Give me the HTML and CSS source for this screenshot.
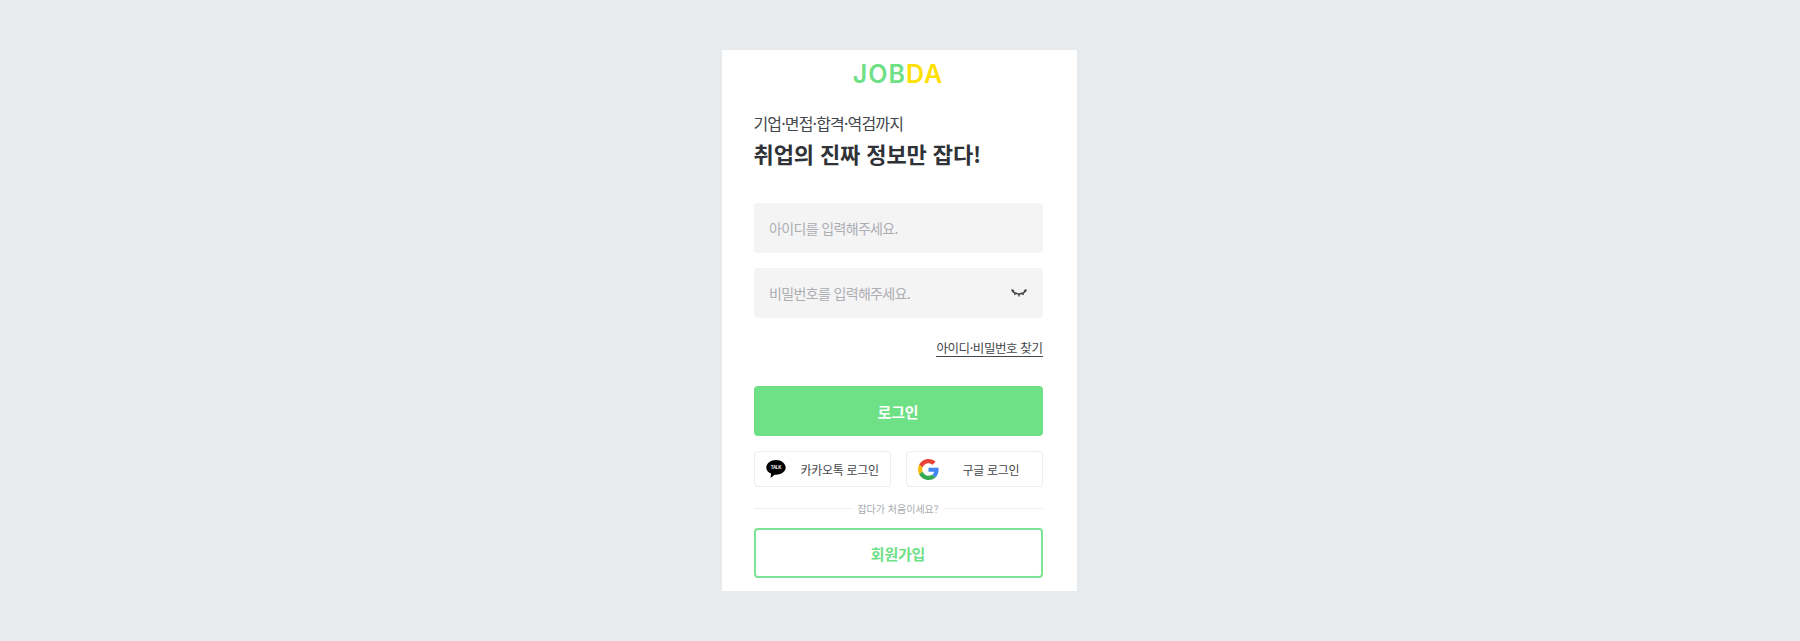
FILE: index.html
```html
<!DOCTYPE html>
<html lang="ko">
<head>
<meta charset="utf-8">
<title>JOBDA 로그인</title>
<link rel="stylesheet" href="styles.css">
</head>
<body>
<main class="panel">
  <h1 class="logo"><span class="logo-green">JOB</span><span class="logo-yellow">DA</span></h1>
  <p class="sub">기업·면접·합격·역검까지</p>
  <h2 class="title">취업의 진짜 정보만 잡다!</h2>
  <form class="form">
    <div class="field"><span class="placeholder">아이디를 입력해주세요.</span></div>
    <div class="field">
      <span class="placeholder">비밀번호를 입력해주세요.</span>
      <svg class="eye" width="16" height="10" viewBox="0 0 16 10" fill="none" stroke="#4a4a4a" stroke-width="1.5">
        <path d="M1 2.500 C4 7 12 7 15 2.500"/>
        <path d="M.5 1.800 L3 3 M4.500 5 L3.500 7 M8 6 V8.500 M11.500 5 L12.500 7 M15.500 1.800 L13 3"/>
      </svg>
    </div>
    <div class="find-row"><a class="find" href="#">아이디·비밀번호 찾기</a></div>
    <button class="btn btn-login" type="button">로그인</button>
    <div class="social">
      <a class="social-btn" href="#">
        <svg class="kakao" width="20" height="20" viewBox="0 0 20 20">
          <path fill="#000" d="M10 1C4.800 1 .3 4.400.3 8.600c0 2.700 1.900 5 4.800 6.200l-.5 4.200 4-3.300h1.400c5.400 0 9.700-3.100 9.700-7.100S15.400 1 10 1z"/>
          <text x="10" y="10.400" class="kakao-text">TALK</text>
        </svg>
        <span class="social-label kakao-label">카카오톡 로그인</span>
      </a>
      <a class="social-btn" href="#">
        <svg class="google" width="21" height="21" viewBox="0 0 48 48">
          <path fill="#EA4335" d="M24 9.500c3.500 0 6.700 1.200 9.200 3.600l6.900-6.900C35.900 2.400 30.500 0 24 0 14.600 0 6.500 5.400 2.600 13.200l8 6.200C12.500 13.700 17.800 9.500 24 9.500z"/>
          <path fill="#4285F4" d="M47 24.500c0-1.600-.1-3.100-.4-4.500H24v9h12.900c-.6 3-2.200 5.500-4.800 7.200l7.700 6C44.300 38.500 47 32 47 24.500z"/>
          <path fill="#FBBC05" d="M10.500 28.600c-.5-1.400-.8-3-.8-4.600s.3-3.200.8-4.600l-8-6.200C.9 16.500 0 20.100 0 24s.9 7.500 2.600 10.800l7.900-6.200z"/>
          <path fill="#34A853" d="M24 48c6.500 0 11.900-2.100 15.900-5.800l-7.700-6c-2.200 1.500-4.900 2.300-8.200 2.300-6.200 0-11.500-4.200-13.400-9.900l-8 6.200C6.500 42.600 14.600 48 24 48z"/>
        </svg>
        <span class="social-label google-label">구글 로그인</span>
      </a>
    </div>
    <div class="divider"><span>잡다가 처음이세요?</span></div>
    <button class="btn btn-signup" type="button">회원가입</button>
  </form>
</main>
</body>
</html>
```
FILE: styles.css
```css
* { box-sizing: border-box; }
html, body { margin: 0; height: 100%; }
body {
  background: #e7ebee;
  font-family: "Noto Sans CJK KR", "Noto Sans", sans-serif;
  display: flex;
  justify-content: center;
  padding-top: 50px;
}
.panel {
  width: 355px;
  height: 541px;
  background: #fff;
  padding: 0 34.5px 0 31.5px;
  display: flex;
  flex-direction: column;
  margin-right: 1px;
}
.logo {
  margin: 10px 0 0;
  height: 29px;
  line-height: 29px;
  text-align: center;
  font-family: Inter, sans-serif;
  font-size: 25px;
  font-weight: 600;
  letter-spacing: 1px;
}
.logo-green { color: #6ee085; }
.logo-yellow { color: #ffe000; }
.sub {
  margin: 22px 0 0;
  font-size: 16px;
  line-height: 24px;
  letter-spacing: -0.85px;
  color: #44474b;
}
.title {
  margin: 2px 0 0;
  font-size: 22px;
  line-height: 32px;
  font-weight: 700;
  letter-spacing: -0.1px;
  color: #2f3236;
}
.form { margin-top: 34px; display: flex; flex-direction: column; }
.field {
  height: 50px;
  background: #f4f4f5;
  border-radius: 4px;
  padding: 0 16px 0 15.5px;
  display: flex;
  align-items: center;
  justify-content: space-between;
  margin-bottom: 15px;
}
.placeholder {
  font-size: 14px;
  letter-spacing: -0.65px;
  color: #acaeb2;
}
.find-row { display: flex; justify-content: flex-end; margin-top: 6px; height: 47px; }
.find {
  height: 18px;
  font-size: 12.5px;
  line-height: 18px;
  letter-spacing: -0.4px;
  color: #44474b;
  text-decoration: none;
  border-bottom: 1px solid #44474b;
}
.btn {
  height: 50px;
  width: 100%;
  border-radius: 4px;
  font-family: inherit;
  font-size: 15px;
  font-weight: 700;
  letter-spacing: -0.2px;
}
.btn-login { background: #6ee085; border: 0; color: #fff; }
.social { display: flex; justify-content: space-between; margin-top: 15px; }
.social-btn {
  width: 137px;
  height: 36px;
  border: 1px solid #ececee;
  border-radius: 4px;
  display: flex;
  align-items: center;
  text-decoration: none;
  color: #44474b;
  font-size: 12px;
  letter-spacing: -0.3px;
}
.kakao { margin-left: 11px; flex: none; }
.kakao-text {
  font-family: "Liberation Sans", sans-serif;
  font-size: 4.500px;
  font-weight: 700;
  fill: #fff;
  text-anchor: middle;
}
.kakao-label { margin-left: 15px; }
.google { margin-left: 11px; flex: none; }
.google-label { margin-left: 24px; }
.divider {
  display: flex;
  align-items: center;
  gap: 5px;
  margin-top: 11px;
  height: 20px;
  font-size: 10px;
  letter-spacing: 0;
  color: #a9abaf;
}
.divider::before, .divider::after { content: ""; flex: 1; height: 1px; background: #eeeeef; }
.btn-signup {
  margin-top: 10px;
  background: #fff;
  border: 2px solid #7ce595;
  color: #6ee085;
}
```
